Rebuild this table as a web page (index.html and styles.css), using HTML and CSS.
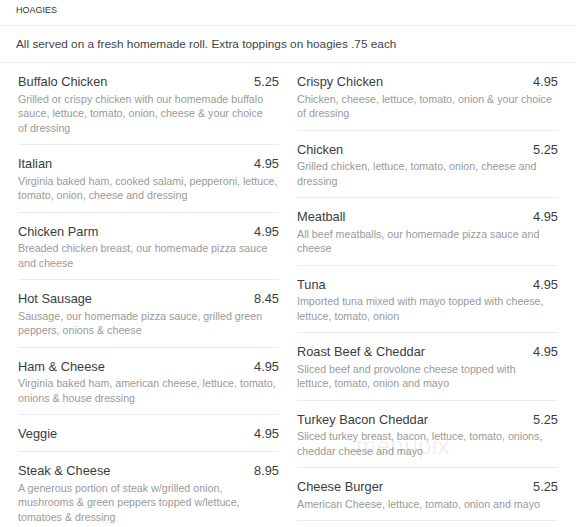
FILE: index.html
```html
<!DOCTYPE html>
<html lang="en">
<head>
<meta charset="utf-8">
<title>Hoagies</title>
<link rel="stylesheet" href="styles.css">
</head>
<body>
<div class="menu">
  <div class="section-head">HOAGIES</div>
  <div class="intro">All served on a fresh homemade roll. Extra toppings on hoagies .75 each</div>
  <div class="cols">
    <div class="col">
      <div class="item"><div class="row"><span class="name">Buffalo Chicken</span><span class="price">5.25</span></div><div class="desc">Grilled or crispy chicken with our homemade buffalo<br>sauce, lettuce, tomato, onion, cheese &amp; your choice<br>of dressing</div></div>
      <div class="item"><div class="row"><span class="name">Italian</span><span class="price">4.95</span></div><div class="desc">Virginia baked ham, cooked salami, pepperoni, lettuce,<br>tomato, onion, cheese and dressing</div></div>
      <div class="item"><div class="row"><span class="name">Chicken Parm</span><span class="price">4.95</span></div><div class="desc">Breaded chicken breast, our homemade pizza sauce<br>and cheese</div></div>
      <div class="item"><div class="row"><span class="name">Hot Sausage</span><span class="price">8.45</span></div><div class="desc">Sausage, our homemade pizza sauce, grilled green<br>peppers, onions &amp; cheese</div></div>
      <div class="item"><div class="row"><span class="name">Ham &amp; Cheese</span><span class="price">4.95</span></div><div class="desc">Virginia baked ham, american cheese, lettuce, tomato,<br>onions &amp; house dressing</div></div>
      <div class="item"><div class="row"><span class="name">Veggie</span><span class="price">4.95</span></div></div>
      <div class="item"><div class="row"><span class="name">Steak &amp; Cheese</span><span class="price">8.95</span></div><div class="desc">A generous portion of steak w/grilled onion,<br>mushrooms &amp; green peppers topped w/lettuce,<br>tomatoes &amp; dressing</div></div>
    </div>
    <div class="col">
      <div class="item"><div class="row"><span class="name">Crispy Chicken</span><span class="price">4.95</span></div><div class="desc">Chicken, cheese, lettuce, tomato, onion &amp; your choice<br>of dressing</div></div>
      <div class="item"><div class="row"><span class="name">Chicken</span><span class="price">5.25</span></div><div class="desc">Grilled chicken, lettuce, tomato, onion, cheese and<br>dressing</div></div>
      <div class="item"><div class="row"><span class="name">Meatball</span><span class="price">4.95</span></div><div class="desc">All beef meatballs, our homemade pizza sauce and<br>cheese</div></div>
      <div class="item"><div class="row"><span class="name">Tuna</span><span class="price">4.95</span></div><div class="desc">Imported tuna mixed with mayo topped with cheese,<br>lettuce, tomato, onion</div></div>
      <div class="item"><div class="row"><span class="name">Roast Beef &amp; Cheddar</span><span class="price">4.95</span></div><div class="desc">Sliced beef and provolone cheese topped with<br>lettuce, tomato, onion and mayo</div></div>
      <div class="item"><div class="row"><span class="name">Turkey Bacon Cheddar</span><span class="price">5.25</span></div><div class="desc">Sliced turkey breast, bacon, lettuce, tomato, onions,<br>cheddar cheese and mayo</div></div>
      <div class="item"><div class="row"><span class="name">Cheese Burger</span><span class="price">5.25</span></div><div class="desc">American Cheese, lettuce, tomato, onion and mayo</div></div>
    </div>
  </div>
  <div class="watermark">menupix</div>
</div>
</body>
</html>
```

FILE: styles.css
```css
html, body {
  margin: 0;
  padding: 0;
  background: #ffffff;
}
body {
  font-family: "Liberation Sans", Arial, sans-serif;
  color: #3a3a3a;
  overflow: hidden;
}
.menu {
  position: relative;
  width: 576px;
}
.section-head {
  font-size: 9px;
  line-height: 13px;
  padding: 4px 16px 8px;
  color: #333;
  border-bottom: 1px solid #ececec;
}
.intro {
  font-size: 11.8px;
  line-height: 16px;
  padding: 10px 16px;
  color: #444;
  border-bottom: 1px solid #ececec;
}
.cols {
  display: grid;
  grid-template-columns: 261px 261px;
  column-gap: 18px;
  padding: 0 18px;
}
.item {
  padding: 9px 0 7px;
  border-bottom: 1px solid #ececec;
}
.row {
  display: flex;
  justify-content: space-between;
  font-size: 12.8px;
  line-height: 20px;
  color: #3c3c3c;
}
.desc {
  margin: -0.5px 0 2px;
  font-size: 10.7px;
  line-height: 14.5px;
  color: #9a9a9a;
  white-space: nowrap;
}
.watermark {
  position: absolute;
  left: 356px;
  top: 432px;
  font-size: 24px;
  line-height: 28px;
  color: rgba(0, 0, 0, 0.07);
  letter-spacing: 0.02em;
}
```
